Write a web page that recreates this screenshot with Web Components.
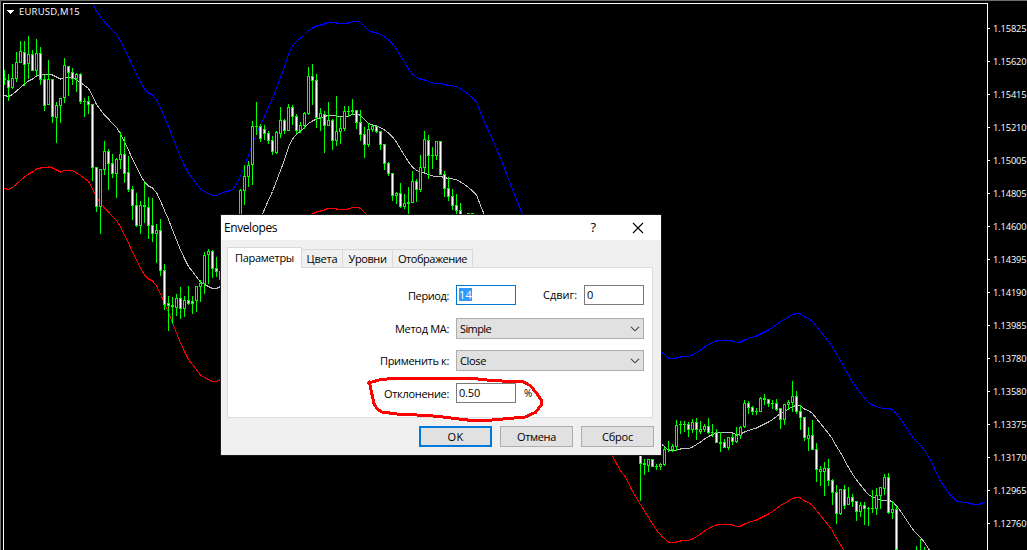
<!DOCTYPE html>
<html lang="ru">
<head>
<meta charset="utf-8">
<title>EURUSD,M15</title>
<style>
    body {
        margin: 0;
        background: #000;
        overflow: hidden;
        font-family: "Open Sans", "Noto Sans", sans-serif;
    }
</style>
</head>
<body>
<chart-window symbol="EURUSD,M15">
    <price-chart></price-chart>
    <price-axis slot="axis" values="1.15825 1.15620 1.15415 1.15210 1.15005 1.14805 1.14600 1.14395 1.14190 1.13985 1.13780 1.13580 1.13375 1.13170 1.12965 1.12760"></price-axis>
    <dialog-window slot="overlay">
        <fit-text slot="title" width="53" style="font-size:12px">Envelopes</fit-text>
        <tab-strip>
            <tab-item active style="width:75px"><fit-text width="59">Параметры</fit-text></tab-item>
            <tab-item style="width:41px"><fit-text width="31">Цвета</fit-text></tab-item>
            <tab-item style="width:50px"><fit-text width="38">Уровни</fit-text></tab-item>
            <tab-item style="width:80px"><fit-text width="69">Отображение</fit-text></tab-item>
        </tab-strip>
        <param-form>
            <form-row style="height:20px">
                <fit-text slot="label" width="41">Период:</fit-text>
                <text-field focused><fit-text width="13">14</fit-text></text-field>
                <fit-text width="34" style="margin-left:27px;width:41px">Сдвиг:</fit-text>
                <text-field><fit-text width="6">0</fit-text></text-field>
            </form-row>
            <form-row style="height:21px;margin-top:13px">
                <fit-text slot="label" width="54">Метод МА:</fit-text>
                <combo-box><fit-text width="31">Simple</fit-text></combo-box>
            </form-row>
            <form-row style="height:21px;margin-top:11px">
                <fit-text slot="label" width="69">Применить к:</fit-text>
                <combo-box><fit-text width="26">Close</fit-text></combo-box>
            </form-row>
            <form-row style="height:20px;margin-top:12px">
                <fit-text slot="label" width="65">Отклонение:</fit-text>
                <text-field><fit-text width="21">0.50</fit-text></text-field>
                <fit-text width="8" style="margin-left:8px;font-size:10px">%</fit-text>
            </form-row>
        </param-form>
        <push-button slot="buttons" primary><fit-text width="16">OK</fit-text></push-button>
        <push-button slot="buttons"><fit-text width="39">Отмена</fit-text></push-button>
        <push-button slot="buttons"><fit-text width="31">Сброс</fit-text></push-button>
    </dialog-window>
    <marker-stroke slot="overlay"></marker-stroke>
</chart-window>

<script>
const define = (name, ctor) => {
    if (!customElements.get(name)) {
        customElements.define(name, ctor);
    }
};

class BaseElement extends HTMLElement {
    constructor() {
        super();
        this.attachShadow({ mode: 'open' }).innerHTML = this.render();
    }
    render() {
        return '<slot></slot>';
    }
}

define('chart-window', class extends BaseElement {
    render() {
        return `
            <style>
            :host {
                display: grid;
                grid-template-columns: 987px 40px;
                position: relative;
                box-sizing: border-box;
                width: 1027px;
                height: 550px;
                overflow: hidden;
                background: #000;
                color: #fff;
            }
            .frame {
                position: absolute;
                inset: 0;
                border-top: 1px solid #6e6e6e;
                border-left: 1px solid #6e6e6e;
            }
            .caption {
                position: absolute;
                left: 7px;
                top: 5px;
                display: flex;
                align-items: center;
                gap: 5px;
                font-size: 9.5px;
            }
            svg { display: block; }
            </style>
            <div class="frame"></div>
            <slot></slot>
            <slot name="axis"></slot>
            <div class="caption">
                <svg width="7" height="4" shape-rendering="crispEdges"><path d="M0 0H7V1H6V2H5V3H4V4H3V3H2V2H1V1H0Z" fill="#fff"/></svg>
                <fit-text width="61"></fit-text>
            </div>
            <slot name="overlay"></slot>
        `;
    }
    connectedCallback() {
        this.shadowRoot.querySelector('fit-text').textContent = this.getAttribute('symbol');
    }
});

// x, high, low, body top, body bottom, 1 = bearish (filled)
const CANDLES = [
    [4,70,85,78,80,0],[8,74,101,80,88,1],[12,64,89,78,88,0],[16,52,82,62,79,0],[20,41,63,51,63,0],
    [24,41,86,52,65,1],[28,36,79,54,64,0],[32,50,71,54,71,1],[36,39,76,53,71,0],[40,47,85,53,80,1],
    [44,75,111,79,106,1],[48,60,105,79,105,0],[52,79,123,79,117,1],[56,102,143,105,118,0],[60,98,123,98,106,0],
    [64,58,103,65,98,0],[68,66,96,66,73,1],[72,68,85,72,79,1],[76,73,92,74,79,0],[80,73,104,74,102,1],
    [84,98,117,101,102,1],[88,96,114,101,105,1],[92,104,181,104,168,1],[96,167,212,167,207,1],[100,169,234,169,207,0],
    [104,141,175,151,170,0],[108,149,190,151,164,1],[112,154,178,163,174,1],[116,158,198,159,174,0],[120,132,169,154,160,0],
    [124,137,183,154,174,1],[128,156,192,172,190,1],[132,186,220,189,206,1],[136,193,227,205,226,1],[140,201,234,205,226,0],
    [144,182,223,205,207,0],[148,197,239,207,226,1],[152,198,242,225,234,1],[156,224,263,230,234,0],[160,219,276,230,271,1],
    [164,264,310,270,305,1],[168,296,331,303,306,1],[172,297,324,305,307,0],[176,294,316,298,308,0],[180,287,319,298,309,1],
    [184,296,317,300,309,0],[188,286,305,300,304,1],[192,296,314,301,304,1],[196,286,312,286,301,0],[200,280,302,283,287,0],
    [204,252,294,255,284,0],[208,249,284,251,255,0],[212,250,278,251,269,1],[216,257,277,268,272,1],[220,271,280,271,280,0],
    [240,189,230,190,230,0],[244,165,205,176,191,0],[248,161,187,165,177,0],[252,121,185,126,165,0],[256,102,135,126,127,1],
    [260,124,142,126,139,1],[264,125,140,129,134,1],[268,131,144,133,141,1],[272,136,155,140,152,1],[276,131,154,132,153,0],
    [280,107,138,120,134,0],[284,119,134,120,131,1],[288,104,131,107,131,0],[292,105,125,107,117,1],[296,114,134,116,131,1],
    [300,122,133,125,131,0],[304,112,129,113,126,0],[308,67,115,76,114,0],[312,64,105,76,81,1],[316,74,128,80,118,1],
    [320,108,131,113,118,0],[324,111,153,114,126,1],[328,102,126,120,126,0],[332,119,150,120,141,1],[336,96,146,131,141,0],
    [340,117,144,128,132,0],[344,106,131,111,129,0],[348,106,117,111,112,1],[352,99,115,110,112,0],[356,110,129,110,123,1],
    [360,110,141,122,135,1],[364,127,158,134,145,1],[368,123,147,129,145,0],[372,125,132,126,130,0],[376,126,133,126,132,1],
    [380,131,150,131,145,1],[384,144,170,144,164,1],[388,162,176,163,174,1],[392,173,201,173,196,1],[396,192,204,193,196,0],
    [400,183,208,193,207,1],[404,194,209,203,207,0],[408,187,215,202,204,1],[412,171,203,181,203,0],[416,179,202,181,190,1],
    [420,155,192,167,190,0],[424,131,172,139,168,0],[428,135,179,140,156,1],[432,147,169,155,156,1],[436,141,160,141,156,0],
    [440,141,175,141,175,1],[444,171,197,174,189,1],[448,177,201,188,197,1],[452,189,210,196,206,1],[456,194,220,205,211,1],
    [460,203,220,210,220,1],[468,213,220,213,220,0],[472,213,220,213,214,0],
    [640,440,501,450,464,1],[644,459,475,463,465,1],[648,459,472,459,466,0],[652,459,467,459,467,1],[656,464,470,466,467,1],
    [660,463,470,464,467,0],[664,447,466,449,465,0],[668,441,452,449,450,1],[672,444,452,446,450,0],[676,420,451,425,447,0],
    [680,421,434,424,425,1],[684,421,432,424,425,1],[688,422,437,424,430,1],[692,419,433,422,430,0],[696,418,440,422,430,1],
    [700,421,434,429,432,0],[704,424,432,426,430,0],[708,418,434,426,433,1],[712,424,437,432,433,1],[716,429,443,432,443,1],
    [720,432,452,442,444,1],[724,439,448,442,448,1],[728,437,450,437,448,0],[732,434,445,437,442,1],[736,427,443,435,442,0],
    [740,426,439,427,436,0],[744,400,428,403,427,0],[748,401,414,403,408,1],[752,406,415,407,412,1],[756,408,415,411,412,1],
    [760,397,412,398,412,0],[764,394,405,398,400,1],[768,399,407,399,404,1],[772,400,409,403,404,1],[776,399,411,403,410,1],
    [780,408,429,408,420,1],[784,404,425,404,420,0],[788,400,410,402,405,0],[792,381,412,396,403,0],[796,391,414,396,412,1],
    [800,405,430,411,418,1],[804,417,441,417,438,1],[808,427,451,435,439,0],[812,420,450,435,450,1],[816,443,482,449,470,1],
    [820,466,486,469,472,0],[824,462,496,468,472,0],[828,459,486,468,481,1],[832,479,505,480,493,1],[836,485,524,492,514,1],
    [840,489,515,489,514,0],[844,485,509,489,506,1],[848,487,505,497,505,0],[852,494,507,497,502,1],[856,501,521,501,512,1],
    [860,502,517,505,512,0],[864,502,525,505,509,1],[868,507,526,508,509,1],[872,490,513,508,509,1],[876,488,515,495,509,0],
    [880,487,509,487,496,0],[884,474,495,477,489,0],[888,473,514,477,513,1],[892,501,519,509,513,0],[896,506,550,509,550,1],
    [916,546,550,550,550,0],[920,539,550,550,550,0],[924,547,550,550,550,0]
];

// Moving average; both envelope bands are shifted copies of it
const AVERAGE = [
    4,95.5, 8,96.5, 12,94.5, 16,91, 20,87.5, 24,84, 28,81, 32,79, 36,76, 40,75, 44,74.5, 48,74, 52,75, 56,77, 60,79, 64,77.5,
    72,77.5, 76,80, 80,82.5, 84,85.5, 88,88.5, 92,96, 96,104.5, 100,110, 104,115, 108,119, 112,123.5, 116,127.5, 120,134,
    124,142, 128,150, 132,159, 136,167, 140,175, 144,182, 148,186, 152,188, 156,192.5, 160,201, 164,210.5, 168,219.5,
    172,230, 176,240, 180,250, 184,258.5, 188,266.5, 192,271.5, 196,277, 200,282, 204,284.5, 208,286.5, 212,288.5,
    216,288.5, 220,286.5, 224,285, 228,284, 232,282.5, 236,277, 240,269, 244,259, 248,248.5, 252,237, 256,227, 260,218,
    264,209.5, 268,200, 272,191.5, 276,181, 280,170.5, 284,160, 288,147, 292,139, 296,134.5, 300,131, 304,127.5, 308,123.5,
    312,121, 316,119, 320,118, 324,117, 328,115, 332,115, 336,116, 348,116, 352,114.5, 358,114.5, 360,115.5, 364,119.5,
    368,123.5, 372,125, 376,126, 380,127.5, 384,130, 388,133, 392,137, 396,142, 400,149, 404,155.5, 408,162, 412,167,
    416,170.5, 420,172, 424,173, 428,174.5, 432,176, 440,176.5, 448,178.5, 456,179.5, 460,182, 464,184.5, 468,187.5,
    472,191, 476,195, 480,205.5, 484,215, 490,228, 500,251, 508,272, 515,290, 522,306, 550,320, 600,345, 612,364, 620,379,
    625,385, 632,399.5, 640,412.5, 649,427, 656,438, 662,445, 668,450, 676,450, 680,449, 688,448.5, 692,447, 696,444.5,
    700,442, 704,439, 708,436.5, 712,434.5, 716,433, 724,432.5, 732,433, 736,434.5, 740,434, 744,432, 748,430.5, 756,428,
    764,424, 768,422, 772,419.5, 776,416.5, 780,413.5, 788,409, 792,406.5, 796,405.5, 800,406, 804,409, 808,410.5,
    812,413.5, 816,418.5, 820,423.5, 824,428.5, 828,433.5, 832,439, 836,446.5, 840,452.5, 844,460, 848,467.5, 852,474,
    856,480, 860,485, 864,490, 868,494.5, 872,497, 876,498.5, 880,500, 888,500.5, 892,501.5, 896,506, 900,511, 904,517,
    908,523, 912,529, 916,533.5, 920,537.5, 924,542.5, 928,548.5, 932,556, 936,565, 940,573.5, 948,585, 956,593,
    960,594, 968,595, 976,597, 980,596, 984,594
];

const bandPoints = (side) => {
    const points = [];
    for (let i = 0; i < AVERAGE.length; i += 2) {
        const x = AVERAGE[i];
        const shift = x < 520 ? 93 : 92;
        points.push(`${x + .5},${AVERAGE[i + 1] + side * shift}`);
    }
    return points.join(' ');
};

const candle = ([x, high, low, top, bottom, filled]) => {
    const wick = `<rect x="${x}" y="${high}" width="1" height="${low - high}" fill="#0f0"/>`;
    const body = `<rect x="${x - 1}" y="${top}" width="3" height="${bottom - top}" fill="#0f0"/>`;
    const core = bottom - top > 2
        ? `<rect x="${x}" y="${top + 1}" width="1" height="${bottom - top - 2}" fill="${filled ? '#fff' : '#000'}"/>`
        : '';
    return wick + body + core;
};

define('price-chart', class extends BaseElement {
    render() {
        return `
            <style>
            :host { display: block; height: 550px; overflow: hidden; }
            svg { display: block; }
            polyline { fill: none; stroke-width: 1; }
            </style>
            <svg width="988" height="550" shape-rendering="crispEdges">
                <defs><clipPath id="plot"><rect x="4" y="4" width="983" height="546"/></clipPath></defs>
                <path d="M3 3H988V4H4V550H3Z" fill="#fff"/>
                <g clip-path="url(#plot)">
                    <polyline points="${bandPoints(0)}" stroke="#c0c0c0"/>
                    <polyline points="${bandPoints(-1)}" stroke="#00f"/>
                    <polyline points="${bandPoints(1)}" stroke="#f00"/>
                    ${CANDLES.map(candle).join('')}
                </g>
            </svg>
        `;
    }
});

define('price-axis', class extends BaseElement {
    render() {
        return `
            <style>
            :host {
                display: flex;
                flex-direction: column;
                box-sizing: border-box;
                height: 547px;
                margin-top: 3px;
                padding-top: 9px;
                border-left: 1px solid #fff;
                font-size: 9.3px;
            }
            .mark { display: flex; align-items: center; height: 33px; gap: 3px; flex: none; }
            .mark::before { content: ""; width: 2px; height: 1px; background: #fff; }
            </style>
            <div id="marks" style="display:contents"></div>
        `;
    }
    connectedCallback() {
        this.shadowRoot.getElementById('marks').innerHTML = this.getAttribute('values').split(' ')
            .map(value => `<div class="mark"><fit-text width="33.5">${value}</fit-text></div>`).join('');
    }
});

define('dialog-window', class extends BaseElement {
    render() {
        return `
            <style>
            :host {
                position: absolute;
                left: 221px;
                top: 215px;
                width: 440px;
                height: 240px;
                display: flex;
                flex-direction: column;
                background: #f0f0f0;
                color: #000;
                font-size: 11px;
                box-shadow: 0 0 0 1px #191919;
            }
            header {
                display: flex;
                align-items: center;
                height: 25px;
                padding: 0 17px 0 3px;
                background: #fff;
            }
            .help { margin-left: auto; font-size: 13px; font-weight: 500; line-height: 14px; margin-right: 36px; padding-bottom: 1px; }
            main { padding: 7px 8px 0 6px; }
            footer { display: flex; justify-content: flex-end; gap: 8px; padding: 8px 7px 0 0; }
            </style>
            <header>
                <slot name="title"></slot>
                <span class="help">?</span>
                <svg width="12" height="12" viewBox="0 0 12 12"><path d="M1 1L11 11M11 1L1 11" stroke="#000" stroke-width="1.1"/></svg>
            </header>
            <main><slot></slot></main>
            <footer><slot name="buttons"></slot></footer>
        `;
    }
});

define('tab-strip', class extends BaseElement {
    render() {
        return `
            <style>
            :host { display: flex; align-items: flex-end; height: 21px; margin-bottom: -1px; }
            </style>
            <slot></slot>
        `;
    }
});

define('tab-item', class extends BaseElement {
    render() {
        return `
            <style>
            :host {
                display: flex;
                align-items: center;
                justify-content: center;
                box-sizing: border-box;
                height: 19px;
                border: 1px solid #d9d9d9;
                border-left: 0;
                background: #f0f0f0;
            }
            :host([active]) {
                height: 21px;
                border-left: 1px solid #d9d9d9;
                border-bottom: 0;
                background: #fff;
                position: relative;
            }
            </style>
            <slot></slot>
        `;
    }
});

define('param-form', class extends BaseElement {
    render() {
        return `
            <style>
            :host {
                display: block;
                box-sizing: border-box;
                height: 151px;
                padding: 17px 8px 0 0;
                border: 1px solid #dcdcdc;
                background: #fff;
            }
            </style>
            <slot></slot>
        `;
    }
});

define('form-row', class extends BaseElement {
    render() {
        return `
            <style>
            :host { display: grid; grid-template-columns: 221px 188px; column-gap: 7px; }
            .label { display: flex; justify-content: flex-end; align-items: center; padding-top: 1px; }
            .controls { display: flex; align-items: center; }
            </style>
            <div class="label"><slot name="label"></slot></div>
            <div class="controls"><slot></slot></div>
        `;
    }
});

define('text-field', class extends BaseElement {
    render() {
        return `
            <style>
            :host {
                display: flex;
                align-items: flex-start;
                box-sizing: border-box;
                width: 60px;
                height: 20px;
                padding: 2px;
                border: 1px solid #7a7a7a;
                background: #fff;
            }
            :host([focused]) { border-color: #0078d7; }
            .value { height: 13px; line-height: 13px; }
            :host([focused]) .value { background: #39f; color: #fff; }
            </style>
            <div class="value"><slot></slot></div>
        `;
    }
});

define('combo-box', class extends BaseElement {
    render() {
        return `
            <style>
            :host {
                display: flex;
                align-items: center;
                justify-content: space-between;
                box-sizing: border-box;
                width: 188px;
                height: 21px;
                padding: 0 3px;
                border: 1px solid #adadad;
                background: #e1e1e1;
            }
            </style>
            <slot></slot>
            <svg width="10" height="6" viewBox="0 0 10 6"><path d="M1 .8L5 4.8L9 .8" fill="none" stroke="#444" stroke-width="1.1"/></svg>
        `;
    }
});

define('push-button', class extends BaseElement {
    render() {
        return `
            <style>
            :host {
                display: flex;
                align-items: center;
                justify-content: center;
                box-sizing: border-box;
                width: 73px;
                height: 21px;
                border: 1px solid #adadad;
                background: #e1e1e1;
            }
            :host([primary]) { border: 2px solid #0078d7; }
            </style>
            <slot></slot>
        `;
    }
});

// Hand-drawn loop round the deviation field
define('marker-stroke', class extends BaseElement {
    render() {
        return `
            <style>
            :host { position: absolute; left: 360px; top: 370px; }
            svg { display: block; }
            </style>
            <svg width="190" height="60" viewBox="360 370 190 60" shape-rendering="crispEdges">
                <path d="M368.5 382.7L371 382.3L380 379.7L391.7 378.5L475 378.7L493 380.7L523 381.7L530.7 386L536.7 393.5L542 401L541.7 404.3L535.7 412.3L525 417L503 419L485 420.7L470 420.3L453 418.3L437 416.3L423 415.3L397 414L381.7 412L376.7 408.3L374 403.3L371 390L369.5 382"
                    fill="none" stroke="#f00" stroke-width="3" stroke-linejoin="round" stroke-linecap="round"/>
            </svg>
        `;
    }
});

// One line of text, tracked so that it takes exactly `width` pixels.
// Defined last: it measures itself with the font size its parents set.
define('fit-text', class extends BaseElement {
    render() {
        return `
            <style>
            :host { display: block; white-space: nowrap; line-height: 14px; flex: none; }
            span { display: inline-block; }
            </style>
            <span><slot></slot></span>
        `;
    }
    connectedCallback() {
        const span = this.shadowRoot.querySelector('span');
        const want = Number(this.getAttribute('width'));
        const natural = span.getBoundingClientRect().width;
        if (!want || !natural) return;
        const gap = (want - natural) / this.textContent.length;
        span.style.letterSpacing = gap.toFixed(3) + 'px';
    }
});
</script>
</body>
</html>
